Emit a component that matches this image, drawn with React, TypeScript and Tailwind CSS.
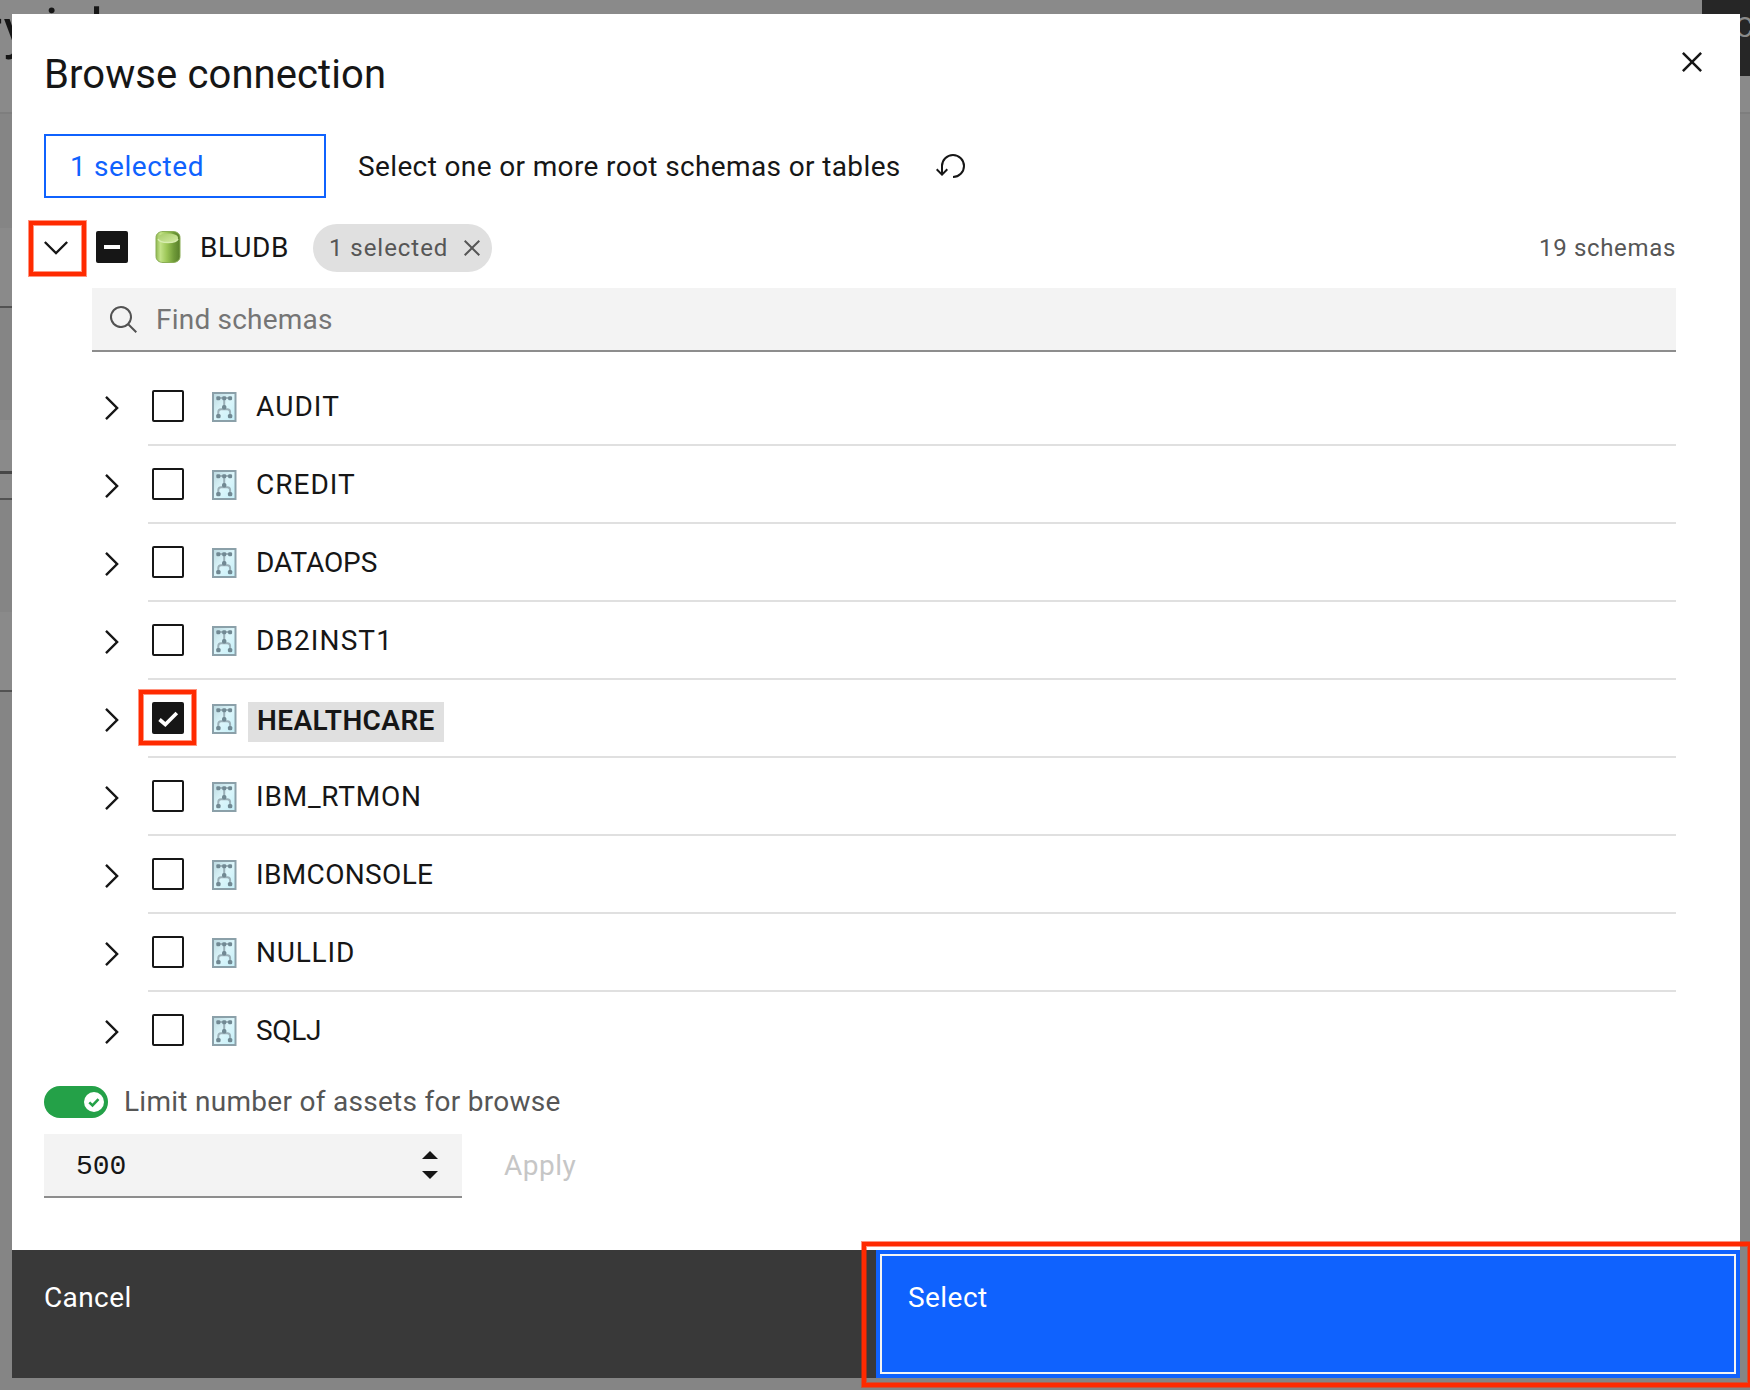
import React from "react";

type Schema = { name: string; spacing: string; checked?: boolean };

const schemas: Schema[] = [
  { name: "AUDIT", spacing: "tracking-[1.1px]" },
  { name: "CREDIT", spacing: "tracking-[1px]" },
  { name: "DATAOPS", spacing: "tracking-[-0.1px]" },
  { name: "DB2INST1", spacing: "tracking-[1.1px]" },
  { name: "HEALTHCARE", spacing: "tracking-[0.4px]", checked: true },
  { name: "IBM_RTMON", spacing: "tracking-[0.8px]" },
  { name: "IBMCONSOLE", spacing: "tracking-[0.35px]" },
  { name: "NULLID", spacing: "tracking-[0.8px]" },
  { name: "SQLJ", spacing: "tracking-[-0.32px]" },
];

function Highlight({ className }: { className: string }) {
  return (
    <div
      className={`pointer-events-none absolute z-10 border-4 border-[#ff2a00] shadow-[0_0_0_1px_rgba(255,42,0,0.5),inset_0_0_0_1px_rgba(255,42,0,0.5)] ${className}`}
    />
  );
}

function CloseIcon({ className }: { className: string }) {
  return (
    <svg viewBox="0 0 32 32" className={className} fill="currentColor">
      <path d="M17.4141 16L24 9.4141 22.5859 8 16 14.5859 9.4143 8 8 9.4141 14.5859 16 8 22.5859 9.4143 24 16 17.4141 22.5859 24 24 22.5859z" />
    </svg>
  );
}

function DatabaseIcon() {
  return (
    <svg viewBox="0 0 26 32" className="-mt-0.5 ml-[27px] h-8 w-[26px] shrink-0">
      <defs>
        <linearGradient id="body" x1="0" x2="1">
          <stop offset="0" stopColor="#8fb750" />
          <stop offset="0.18" stopColor="#c3e388" />
          <stop offset="0.45" stopColor="#9cc657" />
          <stop offset="0.75" stopColor="#6f9a38" />
          <stop offset="1" stopColor="#587f2a" />
        </linearGradient>
        <linearGradient id="lid" x1="0" x2="1" y2="1">
          <stop offset="0" stopColor="#a6cb68" />
          <stop offset="1" stopColor="#d3eba3" />
        </linearGradient>
      </defs>
      <path d="M1 6.500C1 3 4 .5 8 .5h10c4 0 7 2.500 7 6v19c0 3.500-3 6-7 6H8c-4 0-7-2.500-7-6z" fill="url(#body)" stroke="#8aae55" />
      <path d="M3 7c0-3 4-4.500 10-4.500S23 4 23 7s-4 4.500-10 4.500S3 10 3 7z" fill="url(#lid)" />
      <path d="M3 8c1 2.500 5 3.500 10 3.500S22 10.500 23 8" fill="none" stroke="#d8edb0" strokeWidth="1.300" />
    </svg>
  );
}

function SchemaIcon() {
  return (
    <svg viewBox="0 0 25 30" className="mt-px ml-7 h-[30px] w-[25px] shrink-0">
      <defs>
        <linearGradient id="sheet" x1="0" x2="1" y2="1">
          <stop offset="0" stopColor="#bcd9e0" />
          <stop offset="0.5" stopColor="#dcf6fb" />
          <stop offset="1" stopColor="#c4eff8" />
        </linearGradient>
      </defs>
      <rect x="1" y="1" width="22.500" height="28" fill="url(#sheet)" stroke="#8ba0a9" strokeWidth="2" />
      <path d="M5 6h14M12.200 6v11M6.300 24v-4q0-2.800 2.800-2.800h6.200q2.800 0 2.800 2.800v4" fill="none" stroke="#9bb0b8" strokeWidth="2" />
      <g fill="#718993">
        <rect x="4.300" y="4.300" width="4" height="4" rx="1.300" />
        <rect x="10.200" y="4.300" width="4" height="4" rx="1.300" />
        <rect x="16.100" y="4.300" width="4" height="4" rx="1.300" />
        <rect x="10" y="13" width="4.400" height="4.600" rx="1.800" />
        <rect x="4.200" y="22" width="4.400" height="4.200" rx="1.500" />
        <rect x="15.900" y="22" width="4.400" height="4.200" rx="1.500" />
      </g>
    </svg>
  );
}

function Checkbox({ checked }: { checked?: boolean }) {
  if (!checked) return <div className="h-8 w-8 shrink-0 rounded-[2px] border-2 border-[#161616]" />;
  return (
    <div className="h-8 w-8 shrink-0 rounded-[2px] bg-[#161616]">
      <svg viewBox="0 0 32 32" className="h-8 w-8">
        <path d="M7.500 17.500l5.800 5L24.800 11" fill="none" stroke="#fff" strokeWidth="3.700" />
      </svg>
    </div>
  );
}

function SchemaRow({ schema, last }: { schema: Schema; last: boolean }) {
  return (
    <li className="flex h-[78px]">
      <button className="flex w-14 shrink-0 items-center pt-0.5 pl-[13px]">
        <svg viewBox="10.600 6 11.400 20" className="h-6 w-3.5" fill="#161616">
          <path d="M22 16L12 26 10.600 24.600 19.200 16 10.600 7.400 12 6z" />
        </svg>
      </button>
      <div className={`flex flex-1 items-center border-b-2 pl-1 ${last ? "border-transparent" : "border-[#e0e0e0]"}`}>
        <div className="relative">
          <Checkbox checked={schema.checked} />
          {schema.checked && <Highlight className="-top-3 -left-[13px] h-[55px] w-[57px]" />}
        </div>
        <SchemaIcon />
        {schema.checked ? (
          <span className={`mt-2 ml-[11px] flex h-10 w-[196px] items-center bg-[#e0e0e0] pb-[3px] pl-[9px] font-semibold ${schema.spacing}`}>
            {schema.name}
          </span>
        ) : (
          <span className={`ml-[19px] pt-px ${schema.spacing}`}>{schema.name}</span>
        )}
      </div>
    </li>
  );
}

function Backdrop() {
  return (
    <div className="flex h-full justify-between bg-[#8a8a8a]">
      <div className="flex w-3 flex-col">
        <div className="h-[114px] shrink-0 border-b-2 border-[#7e7e7e]" />
        <div className="h-[114px] shrink-0 bg-[#858585]" />
        <div className="h-20 shrink-0 border-b-2 border-[#525252]" />
        <div className="h-28 shrink-0 bg-[#858585]" />
        <div className="h-[54px] shrink-0 border-b-[3px] border-[#474747]" />
        <div className="h-[26px] shrink-0 border-b-2 border-[#525252]" />
        <div className="h-28 shrink-0 bg-[#858585]" />
        <div className="h-20 shrink-0 border-b-2 border-[#525252]" />
        <div className="flex-1 bg-[#858585]" />
      </div>
      <div className="flex-1">
        <div className="mt-[114px] h-full bg-[#858585]" />
      </div>
      <div className="flex w-12 flex-col">
        <div className="flex h-[76px] shrink-0 bg-[#262626] pt-3 pl-[33px] text-[28px] leading-8 text-[#8a8a8a]">C</div>
        <div className="h-[38px] shrink-0 border-b-2 border-[#7e7e7e]" />
        <div className="flex-1 bg-[#858585]" />
      </div>
      <div className="absolute top-[-5px] left-[-17px] text-[56px] leading-[68px] tracking-[1px] whitespace-pre text-[#161616] [word-spacing:-1px]">
        ry i<span className="pl-3">d</span>
      </div>
    </div>
  );
}

export default function App() {
  return (
    <div className="relative h-[1390px] w-[1750px] overflow-hidden font-['Roboto',sans-serif] text-[28px] leading-9 text-[#161616]">
      <Backdrop />

      <section className="absolute top-3.5 left-3 flex h-[1364px] w-[1728px] flex-col bg-white">
        <header className="flex h-[120px] shrink-0 items-start justify-between pl-8">
          <h1 className="mt-[37px] text-[40px] leading-[48px] tracking-[0.1px]">Browse connection</h1>
          <button className="mt-7 mr-7">
            <CloseIcon className="h-10 w-10" />
          </button>
        </header>

        <div className="flex h-16 shrink-0 items-center pl-8">
          <button className="flex h-16 w-[282px] items-center border-2 border-[#0f62fe] pt-0.5 pl-6 tracking-[0.6px] text-[#0f62fe]">
            1 selected
          </button>
          <p className="ml-8 pt-0.5 tracking-[0.37px]">Select one or more root schemas or tables</p>
          <svg viewBox="0 0 32 32" className="ml-[34px] h-8 w-8" fill="#161616">
            <path d="M18 28A12 12 0 1 0 6 16v6.200L2.400 18.600 1 20l6 6 6-6-1.400-1.400L8 22.200V16A10 10 0 1 1 18 26z" />
          </svg>
        </div>

        <div className="mt-3 flex h-[76px] shrink-0 items-center pr-16 pl-8">
          <div className="relative flex w-[52px] shrink-0">
            <svg viewBox="6 10.600 20 11.400" className="h-3.5 w-6" fill="#161616">
              <path d="M16 22L6 12 7.400 10.600 16 19.200 24.600 10.600 26 12z" />
            </svg>
            <Highlight className="-top-5 -left-[15px] h-[55px] w-[57px]" />
          </div>
          <div className="-mt-0.5 flex h-8 w-8 shrink-0 items-center justify-center rounded-[2px] bg-[#161616]">
            <div className="h-1 w-4 bg-white" />
          </div>
          <DatabaseIcon />
          <span className="ml-[19px] w-[113px] tracking-[0.67px]">BLUDB</span>
          <span className="flex h-12 w-[179px] items-center rounded-full bg-[#e0e0e0] pl-4 text-2xl tracking-[0.95px] text-[#565656]">
            <span className="w-[127px]">1 selected</span>
            <CloseIcon className="h-8 w-8 shrink-0" />
          </span>
          <span className="ml-auto text-2xl tracking-[0.67px] text-[#565656]">19 schemas</span>
        </div>

        <div className="mt-0.5 mr-16 ml-20 flex h-16 shrink-0 items-center border-b-2 border-[#8d8d8d] bg-[#f3f3f3] pl-4">
          <svg viewBox="0 0 32 32" className="mt-0.5 h-8 w-8" fill="#525252">
            <path d="M29 27.586l-7.552-7.552a11.018 11.018 0 1 0-1.414 1.414L27.586 29zM4 13a9 9 0 1 1 9 9 9.010 9.010 0 0 1-9-9z" />
          </svg>
          <span className="ml-4 pt-px tracking-[0.21px] text-[#757575]">Find schemas</span>
        </div>

        <ul className="mt-4 mr-16 ml-20 flex shrink-0 flex-col">
          {schemas.map((s, i) => (
            <SchemaRow key={s.name} schema={s} last={i === schemas.length - 1} />
          ))}
        </ul>

        <div className="mt-4 flex h-8 shrink-0 items-center pl-8">
          <div className="flex h-8 w-16 items-center justify-end rounded-full bg-[#24a148] pr-1">
            <svg viewBox="0 0 20 20" className="h-5 w-5">
              <circle cx="10" cy="10" r="10" fill="#fff" />
              <path d="M5.300 10.400l3.200 3 6-6.200" fill="none" stroke="#24a148" strokeWidth="2.600" />
            </svg>
          </div>
          <span className="ml-4 tracking-[0.28px] text-[#565656]">Limit number of assets for browse</span>
        </div>

        <div className="mt-4 flex h-16 shrink-0 items-center pl-8">
          <div className="flex h-16 w-[418px] items-center justify-between border-b-2 border-[#8d8d8d] bg-[#f3f3f3] pr-6 pl-8">
            <span className="pt-1 font-['Liberation_Mono',monospace] text-[28px]">500</span>
            <svg viewBox="0 0 16 28" className="h-7 w-4" fill="#161616">
              <path d="M0 8l8-8 8 8zM0 20h16l-8 8z" />
            </svg>
          </div>
          <span className="ml-[42px] tracking-[0.5px] text-[#c6c6c6]">Apply</span>
        </div>

        <footer className="relative mt-auto flex h-32 shrink-0 text-white">
          <button className="flex w-1/2 items-start bg-[#393939] pt-[30px] pl-8 tracking-[0.4px]">Cancel</button>
          <button className="flex w-1/2 bg-[#0f62fe] p-1">
            <span className="flex flex-1 items-start self-stretch border-2 border-[#f4f4f4] pt-6 pl-[26px] tracking-[0.44px]">Select</span>
          </button>
          <Highlight className="-top-2 left-[850px] h-[145px] w-[890px]" />
        </footer>
      </section>
    </div>
  );
}
